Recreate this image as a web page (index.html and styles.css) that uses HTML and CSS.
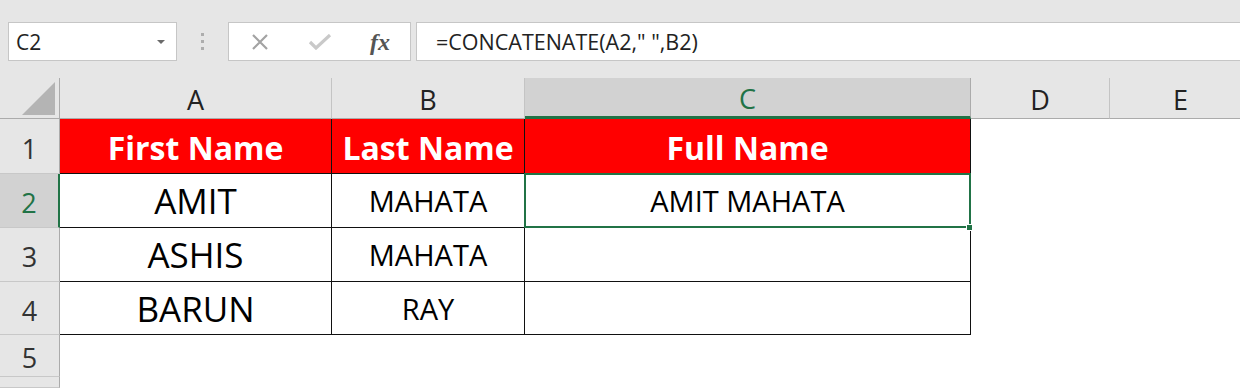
FILE: index.html
```html
<!DOCTYPE html>
<html lang="en">
<head>
  <meta charset="UTF-8" />
  <meta name="viewport" content="width=device-width, initial-scale=1.0"/>
  <title>CONCATENATE</title>
  <link rel="stylesheet" href="styles.css">
</head>
<body>

  <div class="toolbar">
    <div class="namebox">
      <span class="ref">C2</span>
      <span class="caret"></span>
    </div>
    <div class="grip"><i></i><i></i><i></i></div>
    <div class="actions">
      <span class="act">
        <svg width="18" height="18" viewBox="0 0 18 18"><path d="M2 2L16 16M16 2L2 16" stroke="#a3a3a3" stroke-width="2.2" fill="none"/></svg>
      </span>
      <span class="act">
        <svg width="24" height="16" viewBox="0 0 24 16"><path d="M2 8L8 14L22 1" stroke="#c9c9c9" stroke-width="3.2" fill="none"/></svg>
      </span>
      <span class="act fx">fx</span>
    </div>
    <div class="formula">=CONCATENATE(A2," ",B2)</div>
  </div>

  <div class="sheet">
    <div class="corner">
      <svg width="34" height="34" viewBox="0 0 34 34"><polygon points="0,33 33,33 33,0" fill="#b4b4b4"/></svg>
    </div>
    <div class="col-head">A</div>
    <div class="col-head">B</div>
    <div class="col-head active">C</div>
    <div class="col-head">D</div>
    <div class="col-head">E</div>

    <div class="row-head">1</div>
    <div class="cell title">First Name</div>
    <div class="cell title">Last Name</div>
    <div class="cell title">Full Name</div>
    <div class="blank"></div>
    <div class="blank"></div>

    <div class="row-head active">2</div>
    <div class="cell first">AMIT</div>
    <div class="cell">MAHATA</div>
    <div class="cell selected">AMIT MAHATA<span class="handle"></span></div>
    <div class="blank"></div>
    <div class="blank"></div>

    <div class="row-head">3</div>
    <div class="cell first">ASHIS</div>
    <div class="cell">MAHATA</div>
    <div class="cell"></div>
    <div class="blank"></div>
    <div class="blank"></div>

    <div class="row-head">4</div>
    <div class="cell first">BARUN</div>
    <div class="cell">RAY</div>
    <div class="cell"></div>
    <div class="blank"></div>
    <div class="blank"></div>

    <div class="row-head">5</div>
    <div class="blank"></div>
    <div class="blank"></div>
    <div class="blank"></div>
    <div class="blank"></div>
    <div class="blank"></div>

    <div class="row-head"></div>
  </div>

</body>
</html>
```

FILE: styles.css
```css
body {
  margin: 0;
  width: 1240px;
  height: 388px;
  overflow: hidden;
  background: #fff;
  font-family: "Open Sans", "Noto Sans", sans-serif;
  color: #000;
}

/* formula bar */
.toolbar {
  display: flex;
  align-items: flex-start;
  height: 78px;
  padding: 22px 0 0 8px;
  box-sizing: border-box;
  background: #e6e6e6;
  overflow: hidden;
}

.toolbar > div {
  flex-shrink: 0;
}

.namebox,
.actions,
.formula {
  height: 39px;
  box-sizing: border-box;
  border: 1px solid #c6c6c6;
  background: #fff;
  display: flex;
  align-items: center;
}

.namebox {
  width: 169px;
  padding: 0 11px 0 7px;
  justify-content: space-between;
}

.namebox .ref {
  font-size: 21px;
  color: #222;
}

.namebox .caret {
  width: 0;
  height: 0;
  border-left: 4px solid transparent;
  border-right: 4px solid transparent;
  border-top: 4px solid #6a6a6a;
}

.grip {
  width: 51px;
  height: 39px;
  display: flex;
  flex-direction: column;
  align-items: center;
  justify-content: center;
  gap: 4px;
}

.grip i {
  width: 3px;
  height: 3px;
  background: #adadad;
}

.actions {
  width: 183px;
  padding-left: 1px;
}

.act {
  width: 60px;
  display: flex;
  justify-content: center;
  align-items: center;
}

.act.fx {
  font-family: "Liberation Serif", serif;
  font-style: italic;
  font-weight: 700;
  font-size: 24px;
  color: #555;
  padding-top: 2px;
}

.formula {
  width: 900px;
  margin-left: 5px;
  padding-left: 19px;
  font-size: 21.5px;
  color: #222;
}

/* grid */
.sheet {
  display: grid;
  grid-template-columns: 60px 272px 193px 446px 139px 142px;
  grid-template-rows: 41px 55px 54px 54px 53px 42px 11px;
}

.sheet > div {
  box-sizing: border-box;
  display: flex;
  align-items: center;
  justify-content: center;
}

.corner {
  background: #e6e6e6;
  border-right: 1px solid #ababab;
  border-bottom: 1px solid #ababab;
  align-items: flex-end !important;
  justify-content: flex-end !important;
  padding: 0 3px 2px 0;
}

.col-head {
  background: #e6e6e6;
  border-right: 1px solid #c4c4c4;
  border-bottom: 1px solid #ababab;
  font-size: 27px;
  color: #222;
  padding-top: 2px;
}

.col-head.active {
  background: #d2d2d2;
  color: #217346;
  border-bottom: 3px solid #217346;
  border-right-color: #ababab;
}

.row-head {
  background: #e6e6e6;
  border-right: 1px solid #ababab;
  border-bottom: 1px solid #c8c8c8;
  font-size: 27px;
  color: #333;
  padding-top: 4px;
}

.row-head.active {
  background: #d2d2d2;
  color: #217346;
  border-right: 2px solid #217346;
}

.cell {
  border-right: 1px solid #111;
  border-bottom: 1px solid #111;
  font-size: 29px;
  position: relative;
}

.cell.first {
  font-size: 35px;
}

.cell.title {
  background: #ff0000;
  color: #fff;
  font-weight: 700;
  font-size: 32px;
  padding-top: 3px;
}

.cell.selected::after {
  content: "";
  position: absolute;
  top: -1px;
  left: -1px;
  right: -1px;
  bottom: -1px;
  border: 2px solid #217346;
}

.handle {
  position: absolute;
  right: -3px;
  bottom: -4px;
  width: 5px;
  height: 5px;
  background: #217346;
  border: 1px solid #fff;
  z-index: 1;
}
```
